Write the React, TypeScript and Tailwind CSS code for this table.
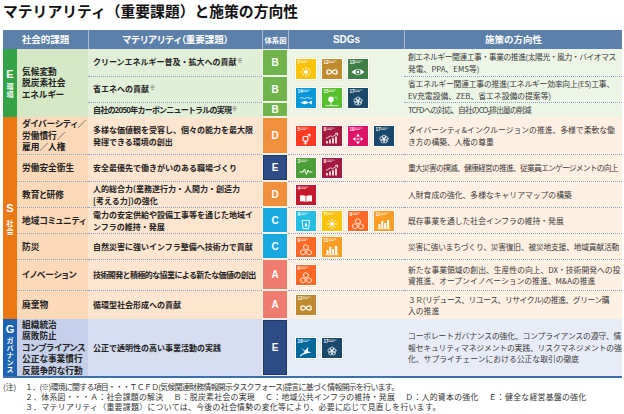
import type { ReactNode } from 'react'

// SDGs公式カラー
const SDG_COLORS: Record<number, string> = {
  3: '#4C9F38',
  4: '#C5192D',
  5: '#FF3A21',
  6: '#26BDE2',
  7: '#FCC30B',
  8: '#A21942',
  9: '#FD6925',
  10: '#DD1367',
  11: '#FD9D24',
  12: '#BF8B2E',
  13: '#3F7E44',
  14: '#0A97D9',
  15: '#56C02B',
  16: '#00689D',
  17: '#19486A',
}

function SdgGlyph({ n, c }: { n: number; c: string }) {
  switch (n) {
    case 3:
      return <polyline points="4,14 7,14 8.5,11 10.5,16.5 12,12 13,14 16,14" strokeWidth="1" />
    case 4:
      return (
        <>
          <path d="M4 10.5 Q7 9.6 10 11 Q13 9.6 16 10.5 V16.6 Q13 15.7 10 17.1 Q7 15.7 4 16.6 Z" fill="#fff" stroke="none" />
          <line x1="10" y1="11" x2="10" y2="17" stroke={c} strokeWidth="0.7" />
        </>
      )
    case 5:
      return (
        <>
          <circle cx="9.5" cy="12.8" r="2.6" strokeWidth="1.1" />
          <path d="M9.5 15.4 V18.4 M8 17.1 H11 M11.4 10.9 L14 8.3 M12 8.3 H14 V10.3" strokeWidth="1" />
        </>
      )
    case 6:
      return (
        <>
          <path d="M6.4 9.4 H13.6 L12.6 17.6 H7.4 Z" strokeWidth="0.9" />
          <path d="M10 11.4 Q8.6 13.4 8.8 14.4 A1.2 1.2 0 0 0 11.2 14.4 Q11.4 13.4 10 11.4Z" fill="#fff" stroke="none" />
        </>
      )
    case 7:
      return (
        <>
          <circle cx="10" cy="13" r="2.1" fill="#fff" stroke="none" />
          {Array.from({ length: 8 }, (_, i) => {
            const a = (i * Math.PI) / 4
            return (
              <line
                key={i}
                x1={10 + 3.2 * Math.cos(a)}
                y1={13 + 3.2 * Math.sin(a)}
                x2={10 + 4.8 * Math.cos(a)}
                y2={13 + 4.8 * Math.sin(a)}
                strokeWidth="0.9"
              />
            )
          })}
        </>
      )
    case 8:
      return (
        <>
          <path d="M5 17.6 V15 M8 17.6 V13.6 M11 17.6 V12.2 M14 17.6 V10.6" strokeWidth="1.6" strokeLinecap="butt" />
          <path d="M4.4 12.4 L8.6 9.8 L10.6 10.8 L15.4 7.4 M13.4 7.3 H15.5 V9.4" strokeWidth="0.8" />
        </>
      )
    case 9:
      return (
        <g strokeWidth="0.8">
          <path d="M10 7.8 L12.3 9 V11.6 L10 12.8 L7.7 11.6 V9 Z" />
          <path d="M7 12.9 L9.3 14.1 V16.7 L7 17.9 L4.7 16.7 V14.1 Z" />
          <path d="M13 12.9 L15.3 14.1 V16.7 L13 17.9 L10.7 16.7 V14.1 Z" />
        </g>
      )
    case 10:
      return (
        <>
          <path d="M10 7.8 L12.1 10.4 H7.9 Z M10 18.2 L12.1 15.6 H7.9 Z M4.8 13 L7.4 10.9 V15.1 Z M15.2 13 L12.6 10.9 V15.1 Z" fill="#fff" stroke="none" />
          <path d="M8.8 12.4 H11.2 M8.8 13.6 H11.2" strokeWidth="0.6" />
        </>
      )
    case 11:
      return (
        <>
          <path d="M4.5 13 h2 v4.6 h-2 Z M7.3 10 h2 v7.6 h-2 Z M10.1 12 h2 v5.6 h-2 Z M12.9 9 h2.3 v8.6 h-2.3 Z" fill="#fff" stroke="none" />
          <path d="M3.8 17.8 H16.2" strokeWidth="0.7" />
        </>
      )
    case 12:
      return (
        <path d="M10 13 C8.2 10.2 4.8 10.2 4.8 13 C4.8 15.8 8.2 15.8 10 13 C11.8 10.2 15.2 10.2 15.2 13 C15.2 15.8 11.8 15.8 10 13Z" strokeWidth="1.3" />
      )
    case 13:
      return (
        <>
          <path d="M3.4 13 Q10 7 16.6 13 Q10 19 3.4 13Z" fill="#fff" stroke="none" />
          <circle cx="10" cy="13" r="2.5" fill={c} stroke="none" />
          <circle cx="10" cy="13" r="1.3" fill="#fff" stroke="none" />
        </>
      )
    case 14:
      return (
        <>
          <path d="M4 10 Q5.5 9 7 10 T10 10 T13 10 T16 10" strokeWidth="0.7" />
          <path d="M4.6 14.6 Q8.8 11.4 12.8 14.6 Q8.8 17.8 4.6 14.6Z M12.6 14.6 L15.8 12.4 V16.8Z" fill="#fff" stroke="none" />
          <circle cx="7" cy="14.2" r="0.5" fill={c} stroke="none" />
        </>
      )
    case 15:
      return (
        <>
          <circle cx="9" cy="11.2" r="2.8" fill="#fff" stroke="none" />
          <path d="M9 13.5 V17.4" strokeWidth="1" />
          <path d="M4 17.7 H16" strokeWidth="0.8" />
          <path d="M12.6 8.8 l0.9 0.7 l0.9 -0.7 M14.4 10.6 l0.7 0.5 l0.7 -0.5" strokeWidth="0.5" />
        </>
      )
    case 16:
      return (
        <>
          <path d="M4.8 9.6 L9 12.8 L12.4 8.8 L11.8 13.2 L15.4 14.6 L10.2 15.4 L7.2 16.8 L8.6 13.8 Z" fill="#fff" stroke="none" />
          <path d="M4.6 17.8 L7.6 15.4" strokeWidth="1.1" />
        </>
      )
    case 17:
      return (
        <g strokeWidth="0.7">
          {Array.from({ length: 5 }, (_, i) => {
            const a = ((-90 + i * 72) * Math.PI) / 180
            return <circle key={i} cx={10 + 2.3 * Math.cos(a)} cy={13.2 + 2.3 * Math.sin(a)} r="1.9" />
          })}
        </g>
      )
    default:
      return null
  }
}

function SdgIcon({ n }: { n: number }) {
  const c = SDG_COLORS[n]
  const lx = n > 9 ? 6.4 : 4.4
  return (
    <svg width="20" height="20" viewBox="0 0 20 20" className="block shrink-0 shadow-[0_0_0_1px_#ffffff,0_0_1px_1px_rgba(0,0,0,0.15)]">
      <rect width="20" height="20" fill={c} />
      <text x="1.4" y="5.2" fontSize="4.6" fontWeight="700" fill="#fff" fontFamily="Liberation Sans, sans-serif">
        {n}
      </text>
      <rect x={lx} y="1.7" width="8" height="0.7" fill="#fff" opacity="0.8" />
      <rect x={lx} y="3.3" width="5.5" height="0.7" fill="#fff" opacity="0.8" />
      <g fill="none" stroke="#fff" strokeLinecap="round" strokeLinejoin="round">
        <SdgGlyph n={n} c={c} />
      </g>
    </svg>
  )
}

const DOT = 'border-t border-dotted border-[#8ea3c3]'

const TAIKEI: Record<string, string> = {
  A: 'bg-[#ee7d6f]',
  B: 'bg-[#71b44e]',
  C: 'bg-[#19a9e1]',
  D: 'bg-[#f0903d]',
  E: 'bg-[#2d4b84] border border-[#1f3766]',
}

type Theme = { kadai: string; mat: string; rest: string }

const E_THEME: Theme = { kadai: 'bg-[#d4e8c6]', mat: 'bg-[#e2efd8]', rest: 'bg-[#edf5e7]' }
const S_THEME: Theme = { kadai: 'bg-[#fbd9b9]', mat: 'bg-[#fde5d0]', rest: 'bg-[#fef0e3]' }
const G_THEME: Theme = { kadai: 'bg-[#c6d0ea]', mat: 'bg-[#d6ddf0]', rest: 'bg-[#e8ecf6]' }

const Note = () => <span className="relative -top-[3px] ml-px text-[5px] font-normal tracking-normal">※</span>

// 行ごとの詰め
const T = ({ k, children }: { k: string; children: ReactNode }) => <span className={k}>{children}</span>

function Kadai({ bg, dotted, span = '', children }: { bg: string; dotted?: boolean; span?: string; children: ReactNode }) {
  return (
    <div className={`${span} ${bg} ${dotted ? DOT : ''} flex items-center pl-[5px] text-[8.7px] font-bold leading-[11.6px] whitespace-nowrap text-[#222] [font-feature-settings:'palt']`}>
      <div>{children}</div>
    </div>
  )
}

function Mat({ bg, dotted, children }: { bg: string; dotted?: boolean; children: ReactNode }) {
  return (
    <div className={`${bg} ${dotted ? DOT : ''} flex items-center pl-[5px] text-[8px] font-bold leading-[11.5px] whitespace-nowrap text-[#222]`}>
      <div>{children}</div>
    </div>
  )
}

function Taikei({ v, bg, span = '' }: { v: string; bg: string; span?: string }) {
  return (
    <div className={`${span} ${bg} p-px`}>
      <div className={`${TAIKEI[v]} flex h-full items-center justify-center font-['Liberation_Sans',sans-serif] text-[10px] font-bold text-white`}>
        {v}
      </div>
    </div>
  )
}

function Sdgs({ rows, bg, dotted, span = '' }: { rows: number[][]; bg: string; dotted?: boolean; span?: string }) {
  return (
    <div className={`${span} ${bg} ${dotted ? DOT : ''} flex flex-col justify-center gap-[9px] pl-[8px]`}>
      {rows.map((r, i) => (
        <div key={i} className="flex gap-[6px]">
          {r.map((n) => (
            <SdgIcon key={n} n={n} />
          ))}
        </div>
      ))}
    </div>
  )
}

function Shisaku({ bg, dotted, children }: { bg: string; dotted?: boolean; children: ReactNode }) {
  return (
    <div className={`${bg} ${dotted ? DOT : ''} flex items-center pl-[4px] text-[7.8px] leading-[11.5px] whitespace-nowrap text-[#3a3a3a]`}>
      <div>{children}</div>
    </div>
  )
}

function Letter({ span, bg, letter, label, gap }: { span: string; bg: string; letter: string; label: string; gap: string }) {
  return (
    <div className={`${span} ${bg} flex flex-col items-center justify-center text-white`}>
      <span className="font-['Liberation_Sans',sans-serif] text-[11px] leading-[12px] font-bold">{letter}</span>
      <span className={`${gap} text-[7.2px] leading-[8px] font-bold [writing-mode:vertical-rl]`}>{label}</span>
    </div>
  )
}

type SRow = { kadai: ReactNode; mat: ReactNode; v: string; sdgs: number[]; shisaku: ReactNode }

const S_ROWS: SRow[] = [
  {
    kadai: <>ダイバーシティ／<br />労働慣行／<br />雇用／人権</>,
    mat: <>多様な価値観を受容し、個々の能力を最大限<br />発揮できる環境の創出</>,
    v: 'D',
    sdgs: [5, 8, 10, 17],
    shisaku: <>ダイバーシティ&amp;インクルージョンの推進、多様で柔軟な働<br />き方の構築、人権の尊重</>,
  },
  {
    kadai: '労働安全衛生',
    mat: '安全最優先で働きがいのある職場づくり',
    v: 'E',
    sdgs: [3, 8],
    shisaku: <T k="tracking-[-0.8px]">重大災害の撲滅、健康経営の推進、従業員エンゲージメントの向上</T>,
  },
  {
    kadai: '教育と研修',
    mat: <>人的総合力(業務遂行力・人間力・創造力<br />[考える力])の強化</>,
    v: 'D',
    sdgs: [4],
    shisaku: '人財育成の強化、多様なキャリアマップの構築',
  },
  {
    kadai: '地域コミュニティ',
    mat: <>電力の安定供給や設備工事等を通じた地域イ<br />ンフラの維持・発展</>,
    v: 'C',
    sdgs: [6, 7, 9, 11],
    shisaku: '既存事業を通した社会インフラの維持・発展',
  },
  {
    kadai: '防災',
    mat: '自然災害に強いインフラ整備へ技術力で貢献',
    v: 'C',
    sdgs: [9, 11],
    shisaku: <T k="tracking-[-0.25px]">災害に強いまちづくり、災害復旧、被災地支援、地域貢献活動</T>,
  },
  {
    kadai: 'イノベーション',
    mat: <T k="tracking-[-0.6px]">技術開発と積極的な協業による新たな価値の創出</T>,
    v: 'A',
    sdgs: [9],
    shisaku: <>新たな事業領域の創出、生産性の向上、DX・技術開発への投<br />資推進、オープンイノベーションの推進、M&amp;Aの推進</>,
  },
  {
    kadai: '廃棄物',
    mat: '循環型社会形成への貢献',
    v: 'A',
    sdgs: [12],
    shisaku: <><T k="tracking-[-0.45px]">３Ｒ(リデュース、リユース、リサイクル)の推進、グリーン購</T><br />入の推進</>,
  },
]

export default function App() {
  const head = 'flex items-center justify-center bg-[#5b80a9] font-bold text-white [font-feature-settings:"palt"]'
  return (
    <div className="h-[414px] w-[624px] overflow-hidden bg-white font-['Noto_Sans_CJK_JP',sans-serif] text-[#222]">
      <h1 className="h-[30px] pl-[3px] text-[14.8px] leading-[21px] font-bold text-[#111]">
        マテリアリティ（重要課題）と施策の方向性
      </h1>

      <div className="ml-[3px] grid w-[619px] grid-cols-[14px_71px_174px_26px_116px_218px] grid-rows-[19px_27px_26px_15px_37px_27px_26px_26px_26px_31px_29px_57px] border-b-2 border-[#3d6eb0]">
        {/* 見出し */}
        <div className={`${head} col-span-2 text-[9.5px]`}>社会的課題</div>
        <div className={`${head} border-l border-[#a7bbd3] text-[9.5px]`}>マテリアリティ（重要課題）</div>
        <div className={`${head} border-l border-[#a7bbd3] text-[7.4px]`}>体系図</div>
        <div className={`${head} border-l border-[#a7bbd3] font-['Liberation_Sans',sans-serif] text-[10px]`}>SDGs</div>
        <div className={`${head} border-l border-[#a7bbd3] text-[9.5px]`}>施策の方向性</div>

        {/* E 環境 */}
        <Letter span="row-span-3" bg="bg-[#34a246]" letter="E" label="環境" gap="mt-[3px]" />
        <Kadai span="row-span-3" bg={E_THEME.kadai}>
          気候変動<br />脱炭素社会<br />エネルギー
        </Kadai>
        <Mat bg={E_THEME.mat}>
          クリーンエネルギー普及・拡大への貢献<Note />
        </Mat>
        <Taikei v="B" bg={E_THEME.rest} />
        <Sdgs span="row-span-3" bg={E_THEME.rest} rows={[[7, 12, 13], [14, 15, 17]]} />
        <Shisaku bg={E_THEME.rest}>
          <T k="tracking-[-0.45px]">創エネルギー関連工事・事業の推進(太陽光・風力・バイオマス</T>
          <br />発電、PPA、EMS等)
        </Shisaku>

        <Mat bg={E_THEME.mat} dotted>
          省エネへの貢献<Note />
        </Mat>
        <Taikei v="B" bg={E_THEME.rest} />
        <Shisaku bg={E_THEME.rest} dotted>
          <T k="tracking-[-0.2px]">省エネルギー関連工事の推進(エネルギー効率向上(ES)工事、</T>
          <br />EV充電設備、ZEB、省エネ設備の提案等)
        </Shisaku>

        <Mat bg={E_THEME.mat} dotted>
          <T k="tracking-[-0.8px]">自社の2050年カーボンニュートラルの実現</T>
          <Note />
        </Mat>
        <Taikei v="B" bg={E_THEME.rest} />
        <Shisaku bg={E_THEME.rest} dotted>
          <T k="tracking-[-0.9px]">
            TCFDへの対応、自社のCO<sub className="text-[5px]">2</sub>排出量の削減
          </T>
        </Shisaku>

        {/* S 社会 */}
        <Letter span="row-span-7" bg="bg-[#ec7814]" letter="S" label="社会" gap="mt-[6px]" />
        {S_ROWS.map((r, i) => (
          <SRowCells key={i} row={r} dotted={i > 0} />
        ))}

        {/* G ガバナンス */}
        <Letter span="" bg="bg-[#1d63b0]" letter="G" label="ガバナンス" gap="mt-[2px]" />
        <Kadai bg={G_THEME.kadai}>
          組織統治<br />腐敗防止<br />コンプライアンス<br />公正な事業慣行<br />反競争的な行動
        </Kadai>
        <Mat bg={G_THEME.mat}>公正で透明性の高い事業活動の実践</Mat>
        <Taikei v="E" bg={G_THEME.rest} />
        <Sdgs bg={G_THEME.rest} rows={[[16, 17]]} />
        <Shisaku bg={G_THEME.rest}>
          <T k="tracking-[-0.15px]">コーポレートガバナンスの強化、コンプライアンスの遵守、情</T>
          <br />
          <T k="tracking-[-0.15px]">報セキュリティマネジメントの実践、リスクマネジメントの強</T>
          <br />
          化、サプライチェーンにおける公正な取引の徹底
        </Shisaku>
      </div>

      {/* 注記 */}
      <div className="mt-[4px] flex pl-[3px] text-[7.9px] leading-[9.8px] whitespace-nowrap text-[#333]">
        <div className="w-[22px] shrink-0">(注)</div>
        <div>
          <div className="tracking-[-0.7px]">１．(※)環境に関する項目・・・ＴＣＦＤ(気候関連財務情報開示タスクフォース)提言に基づく情報開示を行います。</div>
          <div className="tracking-[0.25px]">２．体系図・・・Ａ：社会課題の解決　 Ｂ：脱炭素社会の実現　 Ｃ：地域公共インフラの維持・発展　 Ｄ：人的資本の強化　 Ｅ：健全な経営基盤の強化</div>
          <div className="tracking-[0.3px]">３．マテリアリティ（重要課題）については、今後の社会情勢の変化等により、必要に応じて見直しを行います。</div>
        </div>
      </div>
    </div>
  )
}

function SRowCells({ row, dotted }: { row: SRow; dotted: boolean }) {
  return (
    <>
      <Kadai bg={S_THEME.kadai} dotted={dotted}>
        {row.kadai}
      </Kadai>
      <Mat bg={S_THEME.mat} dotted={dotted}>
        {row.mat}
      </Mat>
      <Taikei v={row.v} bg={S_THEME.rest} />
      <Sdgs bg={S_THEME.rest} dotted={dotted} rows={[row.sdgs]} />
      <Shisaku bg={S_THEME.rest} dotted={dotted}>
        {row.shisaku}
      </Shisaku>
    </>
  )
}
